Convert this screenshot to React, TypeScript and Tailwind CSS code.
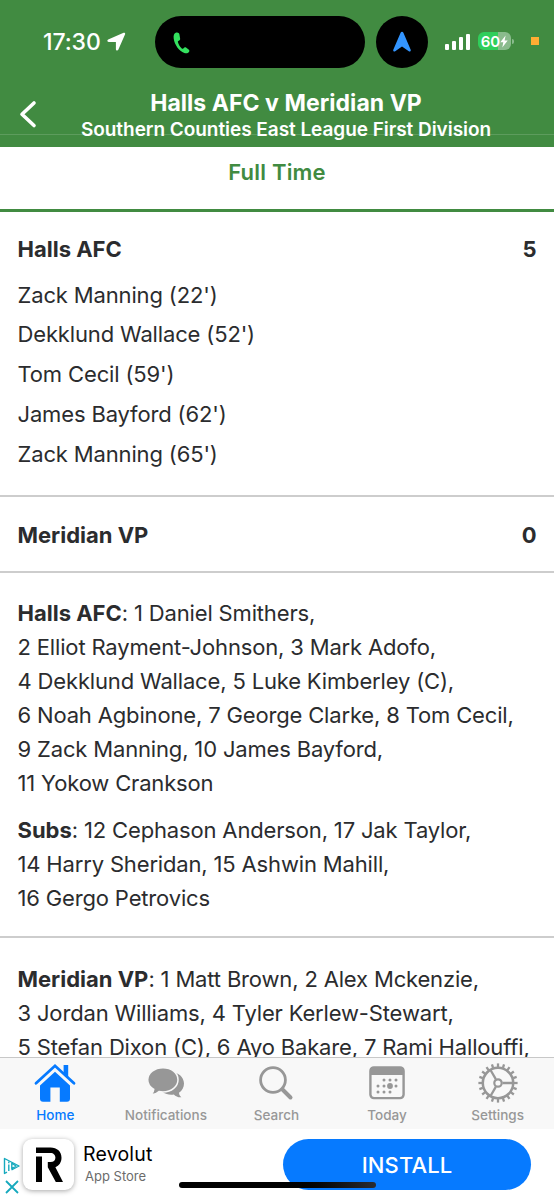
import React, { ReactNode } from 'react'

interface Lineup {
  label: string
  lines: string[]
}

const scorers = [
  "Zack Manning (22')",
  "Dekklund Wallace (52')",
  "Tom Cecil (59')",
  "James Bayford (62')",
  "Zack Manning (65')"
]

const homeTeam: Lineup = {
  label: 'Halls AFC',
  lines: [
    '1 Daniel Smithers,',
    '2 Elliot Rayment-Johnson, 3 Mark Adofo,',
    '4 Dekklund Wallace, 5 Luke Kimberley (C),',
    '6 Noah Agbinone, 7 George Clarke, 8 Tom Cecil,',
    '9 Zack Manning, 10 James Bayford,',
    '11 Yokow Crankson'
  ]
}

const homeSubs: Lineup = {
  label: 'Subs',
  lines: [
    '12 Cephason Anderson, 17 Jak Taylor,',
    '14 Harry Sheridan, 15 Ashwin Mahill,',
    '16 Gergo Petrovics'
  ]
}

const awayTeam: Lineup = {
  label: 'Meridian VP',
  lines: [
    '1 Matt Brown, 2 Alex Mckenzie,',
    '3 Jordan Williams, 4 Tyler Kerlew-Stewart,',
    '5 Stefan Dixon (C), 6 Ayo Bakare, 7 Rami Hallouffi,'
  ]
}

function HomeIcon() {
  return (
    <svg width="42" height="40" viewBox="0 0 42 40" fill="currentColor">
      <path d="M21 8.800 36 22.600v13.200a3 3 0 0 1-3 3h-7.200V24.600h-9.400v14.200H9a3 3 0 0 1-3-3V22.600z" />
      <path d="M2 20.200 21 2.800l19 17.400" fill="none" stroke="#f8f8f8" strokeWidth="6" />
      <path d="M2 20.200 21 2.800l19 17.400" fill="none" stroke="currentColor" strokeWidth="2.800" strokeLinecap="round" />
      <path d="M29.600 2h4.600v12.200l-4.600-4.200z" />
    </svg>
  )
}

function ChatIcon() {
  return (
    <svg width="38" height="32" viewBox="0 0 38 32" fill="currentColor">
      <path d="M24 5c7 0 13 5 13 11.500 0 4-1.800 7-5 9.200.2 2 .8 3.300 2.400 4.600-3 .3-5.600-.8-7.600-2.800-4 .6-8-.2-11-2.200z" />
      <path
        d="M16 .7C24.500.7 31 6 31 12.800S24.500 25 16 25c-1.500 0-2.700-.1-4-.4-2 2-4.600 3.200-7.800 2.900 1.700-1.500 2.500-3.200 2.600-5.200C3 20.200.7 16.800.7 12.800.7 6 7.500.7 16 .7z"
        stroke="#f8f8f8"
        strokeWidth="1.500"
      />
    </svg>
  )
}

function SearchIcon() {
  return (
    <svg width="36" height="36" viewBox="0 0 36 36" fill="none" stroke="currentColor">
      <circle cx="15" cy="15" r="12.400" strokeWidth="2.800" />
      <path d="m24.500 24.500 8 8" strokeWidth="4" strokeLinecap="round" />
    </svg>
  )
}

function CalendarIcon() {
  const dots = [
    [15, 14], [21, 14], [27, 14],
    [9, 20], [15, 20], [27, 20],
    [9, 26], [15, 26], [21, 26]
  ]
  return (
    <svg width="36" height="34" viewBox="0 0 36 34" fill="currentColor">
      <rect x="1.400" y="1.400" width="33.200" height="30.700" rx="3.500" fill="none" stroke="currentColor" strokeWidth="2.400" />
      <path d="M1 9V5a4 4 0 0 1 4-4h26a4 4 0 0 1 4 4v4z" />
      {dots.map(([x, y]) => (
        <circle key={`${x}-${y}`} cx={x} cy={y} r="1.500" />
      ))}
      <circle cx="21" cy="20" r="2.900" />
    </svg>
  )
}

function GearIcon() {
  const teeth = Array.from({ length: 20 }, (_, i) => i * 18)
  return (
    <svg width="40" height="40" viewBox="-20 -20 40 40" fill="none" stroke="currentColor">
      <circle r="15.200" strokeWidth="2.500" />
      <circle r="3.700" strokeWidth="2.200" />
      {teeth.map(angle => (
        <path key={angle} d="M16 0h3.600" strokeWidth="2.300" transform={`rotate(${angle})`} />
      ))}
      <path d="M4.500 0H15M-2.200-3.900-7.500-13M-2.200 3.900-7.500 13" strokeWidth="2.300" />
    </svg>
  )
}

function StatusBar() {
  return (
    <div className="flex h-[84px] items-center text-white">
      <span className="ml-[43px] w-[60px] text-[23px] font-medium tracking-[-0.1px] whitespace-nowrap">17:30</span>
      <svg className="-mt-[2px] ml-[4px]" width="19" height="19" viewBox="0 0 19 19" fill="currentColor">
        <path d="M16.600.8 1.200 7.600c-1.300.6-1 2.400.5 2.400h7.200v7.200c0 1.500 1.800 1.800 2.400.5l6.800-15.400c.4-1-.5-1.900-1.500-1.500z" />
      </svg>
      <div className="ml-[29px] flex h-[52px] w-[210px] items-center rounded-full bg-black pl-[18px]">
        <svg className="mt-[2px]" width="17" height="22" viewBox="0 0 17 22" fill="#34e15f">
          <path d="M2.700.8C1 1.600.3 3.600.7 6.400 1.600 12.800 6 18.900 11.300 20.900c2 .7 3.700.3 4.700-1 .7-1 .4-1.800-.4-2.400l-2.600-1.900c-.9-.6-1.700-.3-2.500.7-.5.6-1 .7-1.700.2-2-1.600-3.300-3.900-3.900-6.400-.1-.7.100-1.100.9-1.400 1.200-.4 1.500-1 1.300-2.100L6.400 2.300C6.100.8 4.500 0 2.700.8z" />
        </svg>
      </div>
      <div className="ml-[11px] flex size-[52px] items-center justify-center rounded-full bg-black">
        <svg className="-mt-[1px]" width="20" height="22" viewBox="0 0 20 22" fill="#3395ff">
          <path d="M8.600 1.700c.5-1.300 2.300-1.300 2.800 0l7.300 17.100c.5 1.200-.8 2.300-1.900 1.500L10 15.600l-6.800 4.700c-1.100.8-2.400-.3-1.900-1.500z" />
        </svg>
      </div>
      <div className="-mt-[2px] ml-[17px] flex h-[17px] items-end gap-[3px]">
        <span className="h-[6px] w-[4px] rounded-[1px] bg-white" />
        <span className="h-[9px] w-[4px] rounded-[1px] bg-white" />
        <span className="h-[13px] w-[4px] rounded-[1px] bg-white" />
        <span className="h-[16px] w-[4px] rounded-[1px] bg-white" />
      </div>
      <div className="-mt-[2px] ml-[8px] flex h-[18px] w-[33px] items-center justify-center rounded-[6px] bg-linear-to-r from-[#30ce5b] from-60% to-[#8abb8d] to-60%">
        <span className="text-[15px] leading-none font-semibold">60</span>
        <svg width="8" height="13" viewBox="0 0 8 13" fill="currentColor">
          <path d="M5.600.5.300 7.300h3L2.300 12.500 7.700 5.600H4.600z" />
        </svg>
      </div>
      <span className="-mt-[2px] ml-[1px] h-[5px] w-[2px] rounded-r bg-[#8abb8d]" />
      <span className="-mt-[2px] ml-[17px] size-[8px] bg-[#ffad33]" />
    </div>
  )
}

function TeamScore({ name, score }: { name: string; score: number }) {
  return (
    <div className="flex h-[30px] items-center justify-between text-[22px] font-bold">
      <span>{name}</span>
      <span>{score}</span>
    </div>
  )
}

function LineupText({ label, lines }: Lineup) {
  return (
    <p className="text-[22px] leading-[34.100px] tracking-[-0.16px] whitespace-nowrap">
      <span className="font-bold tracking-normal">{label}</span>:{' '}
      {lines.map(line => (
        <React.Fragment key={line}>
          {line}
          <br />
        </React.Fragment>
      ))}
    </p>
  )
}

function Tab({ label, icon, active = false }: { label: string; icon: ReactNode; active?: boolean }) {
  return (
    <button className={active ? 'flex flex-1 flex-col items-center text-[#067aff]' : 'flex flex-1 flex-col items-center text-[#979797]'}>
      <span className="flex h-[49px] items-center justify-center">{icon}</span>
      <span className="text-[13.500px] leading-[16px] font-medium">{label}</span>
    </button>
  )
}

function AdBanner() {
  return (
    <div className="relative flex h-[71px] shrink-0 items-start bg-white">
      <div className="mt-[28px] ml-[3px] flex w-[20px] flex-col gap-[5px] text-[#16a9bd]">
        <svg width="18" height="18" viewBox="0 0 18 18" fill="none" stroke="currentColor" strokeWidth="1.400" strokeLinejoin="round">
          <path d="M4 15.200 1.500 16.500v-15L16 9l-7.500 4" />
          <path d="M5.800 7.500V14M5.800 4.500v1.700M8.800 6.200v5.600L13 9z" />
        </svg>
        <svg width="18" height="14" viewBox="0 0 18 14" fill="none" stroke="currentColor" strokeWidth="1.800">
          <path d="m3 1 12 12M15 1 3 13" />
        </svg>
      </div>
      <div className="mt-[10px] flex size-[51px] items-center justify-center rounded-[9px] bg-white shadow-[0_1px_5px_rgba(0,0,0,0.35)]">
        <svg width="30" height="36" viewBox="0 0 30 36" fill="#000">
          <path d="M2 9.500h6V35H2z" />
          <path d="M2 .5h14.500c6.600 0 11 4.200 11 10.300 0 4.600-2.400 7.900-6.100 9.500L29 35h-7.200l-8-14.800v-5.100h2.700c3 0 4.900-1.600 4.900-4.300S19.500 6 16.500 6H2z" />
        </svg>
      </div>
      <div className="mt-[12px] ml-[9px] w-[200px]">
        <div className="text-[19.500px] leading-[26px] tracking-[0.2px] text-black">Revolut</div>
        <div className="ml-[2px] text-[13px] leading-[18px] text-[#6b6b6b]">App Store</div>
      </div>
      <button className="mt-[10px] h-[51px] w-[248px] rounded-full bg-[#067aff] pt-px text-[22px] font-medium tracking-[0.1px] text-white">
        INSTALL
      </button>
      <div className="absolute top-[53px] left-[179px] h-[6px] w-[197px] rounded-full bg-linear-to-r from-black from-50% to-[#2b2d32]" />
    </div>
  )
}

export default function App() {
  return (
    <div className="flex h-[1200px] w-[554px] flex-col overflow-hidden bg-white font-['Inter',sans-serif] text-[#2b2c2e]">
      <header className="relative h-[146.500px] shrink-0 bg-[#418b41] text-white">
        <StatusBar />
        <div className="flex">
          <svg className="mt-[15px] ml-[18px]" width="20" height="30" viewBox="0 0 20 30" fill="none" stroke="currentColor" strokeWidth="3.600" strokeLinecap="round" strokeLinejoin="round">
            <path d="M16 4 4 15.300 16 26.500" />
          </svg>
          <div className="mt-[6px] ml-[-22px] flex-1 pl-[2px] text-center whitespace-nowrap">
            <h1 className="text-[23px] leading-[27px] font-bold tracking-[0.050px]">Halls AFC v Meridian VP</h1>
            <h2 className="text-[19px] leading-[25px] font-semibold tracking-[-0.050px]">Southern Counties East League First Division</h2>
          </div>
        </div>
        <div className="absolute inset-x-0 top-[134px] h-px bg-white/15" />
      </header>

      <main className="min-h-0 flex-1 overflow-hidden">
        <div className="h-[65.500px] border-b-[3px] border-[#418b41] pt-[10px] text-center text-[22px] leading-[30px] font-semibold tracking-[0.2px] text-[#418b41]">
          Full Time
        </div>

        <section className="h-[285px] border-b-2 border-[#cdcdcd] px-[17.500px] pt-[22px]">
          <TeamScore name="Halls AFC" score={5} />
          <ul className="mt-[11.500px] text-[22px] leading-[39.800px] tracking-[-0.15px]">
            {scorers.map(scorer => (
              <li key={scorer}>{scorer}</li>
            ))}
          </ul>
        </section>

        <section className="h-[75.500px] border-b-2 border-[#cdcdcd] px-[17.500px] pt-[23px]">
          <TeamScore name="Meridian VP" score={0} />
        </section>

        <section className="flex h-[365.500px] flex-col gap-[12px] border-b-2 border-[#cdcdcd] px-[17.500px] pt-[23.500px]">
          <LineupText {...homeTeam} />
          <LineupText {...homeSubs} />
        </section>

        <section className="px-[17.500px] pt-[24px]">
          <LineupText {...awayTeam} />
        </section>
      </main>

      <nav className="flex h-[72px] shrink-0 border-t border-[#c8c8c8] bg-[#f8f8f8] pr-px">
        <Tab label="Home" icon={<HomeIcon />} active />
        <Tab label="Notifications" icon={<ChatIcon />} />
        <Tab label="Search" icon={<SearchIcon />} />
        <Tab label="Today" icon={<CalendarIcon />} />
        <Tab label="Settings" icon={<GearIcon />} />
      </nav>

      <AdBanner />
    </div>
  )
}
